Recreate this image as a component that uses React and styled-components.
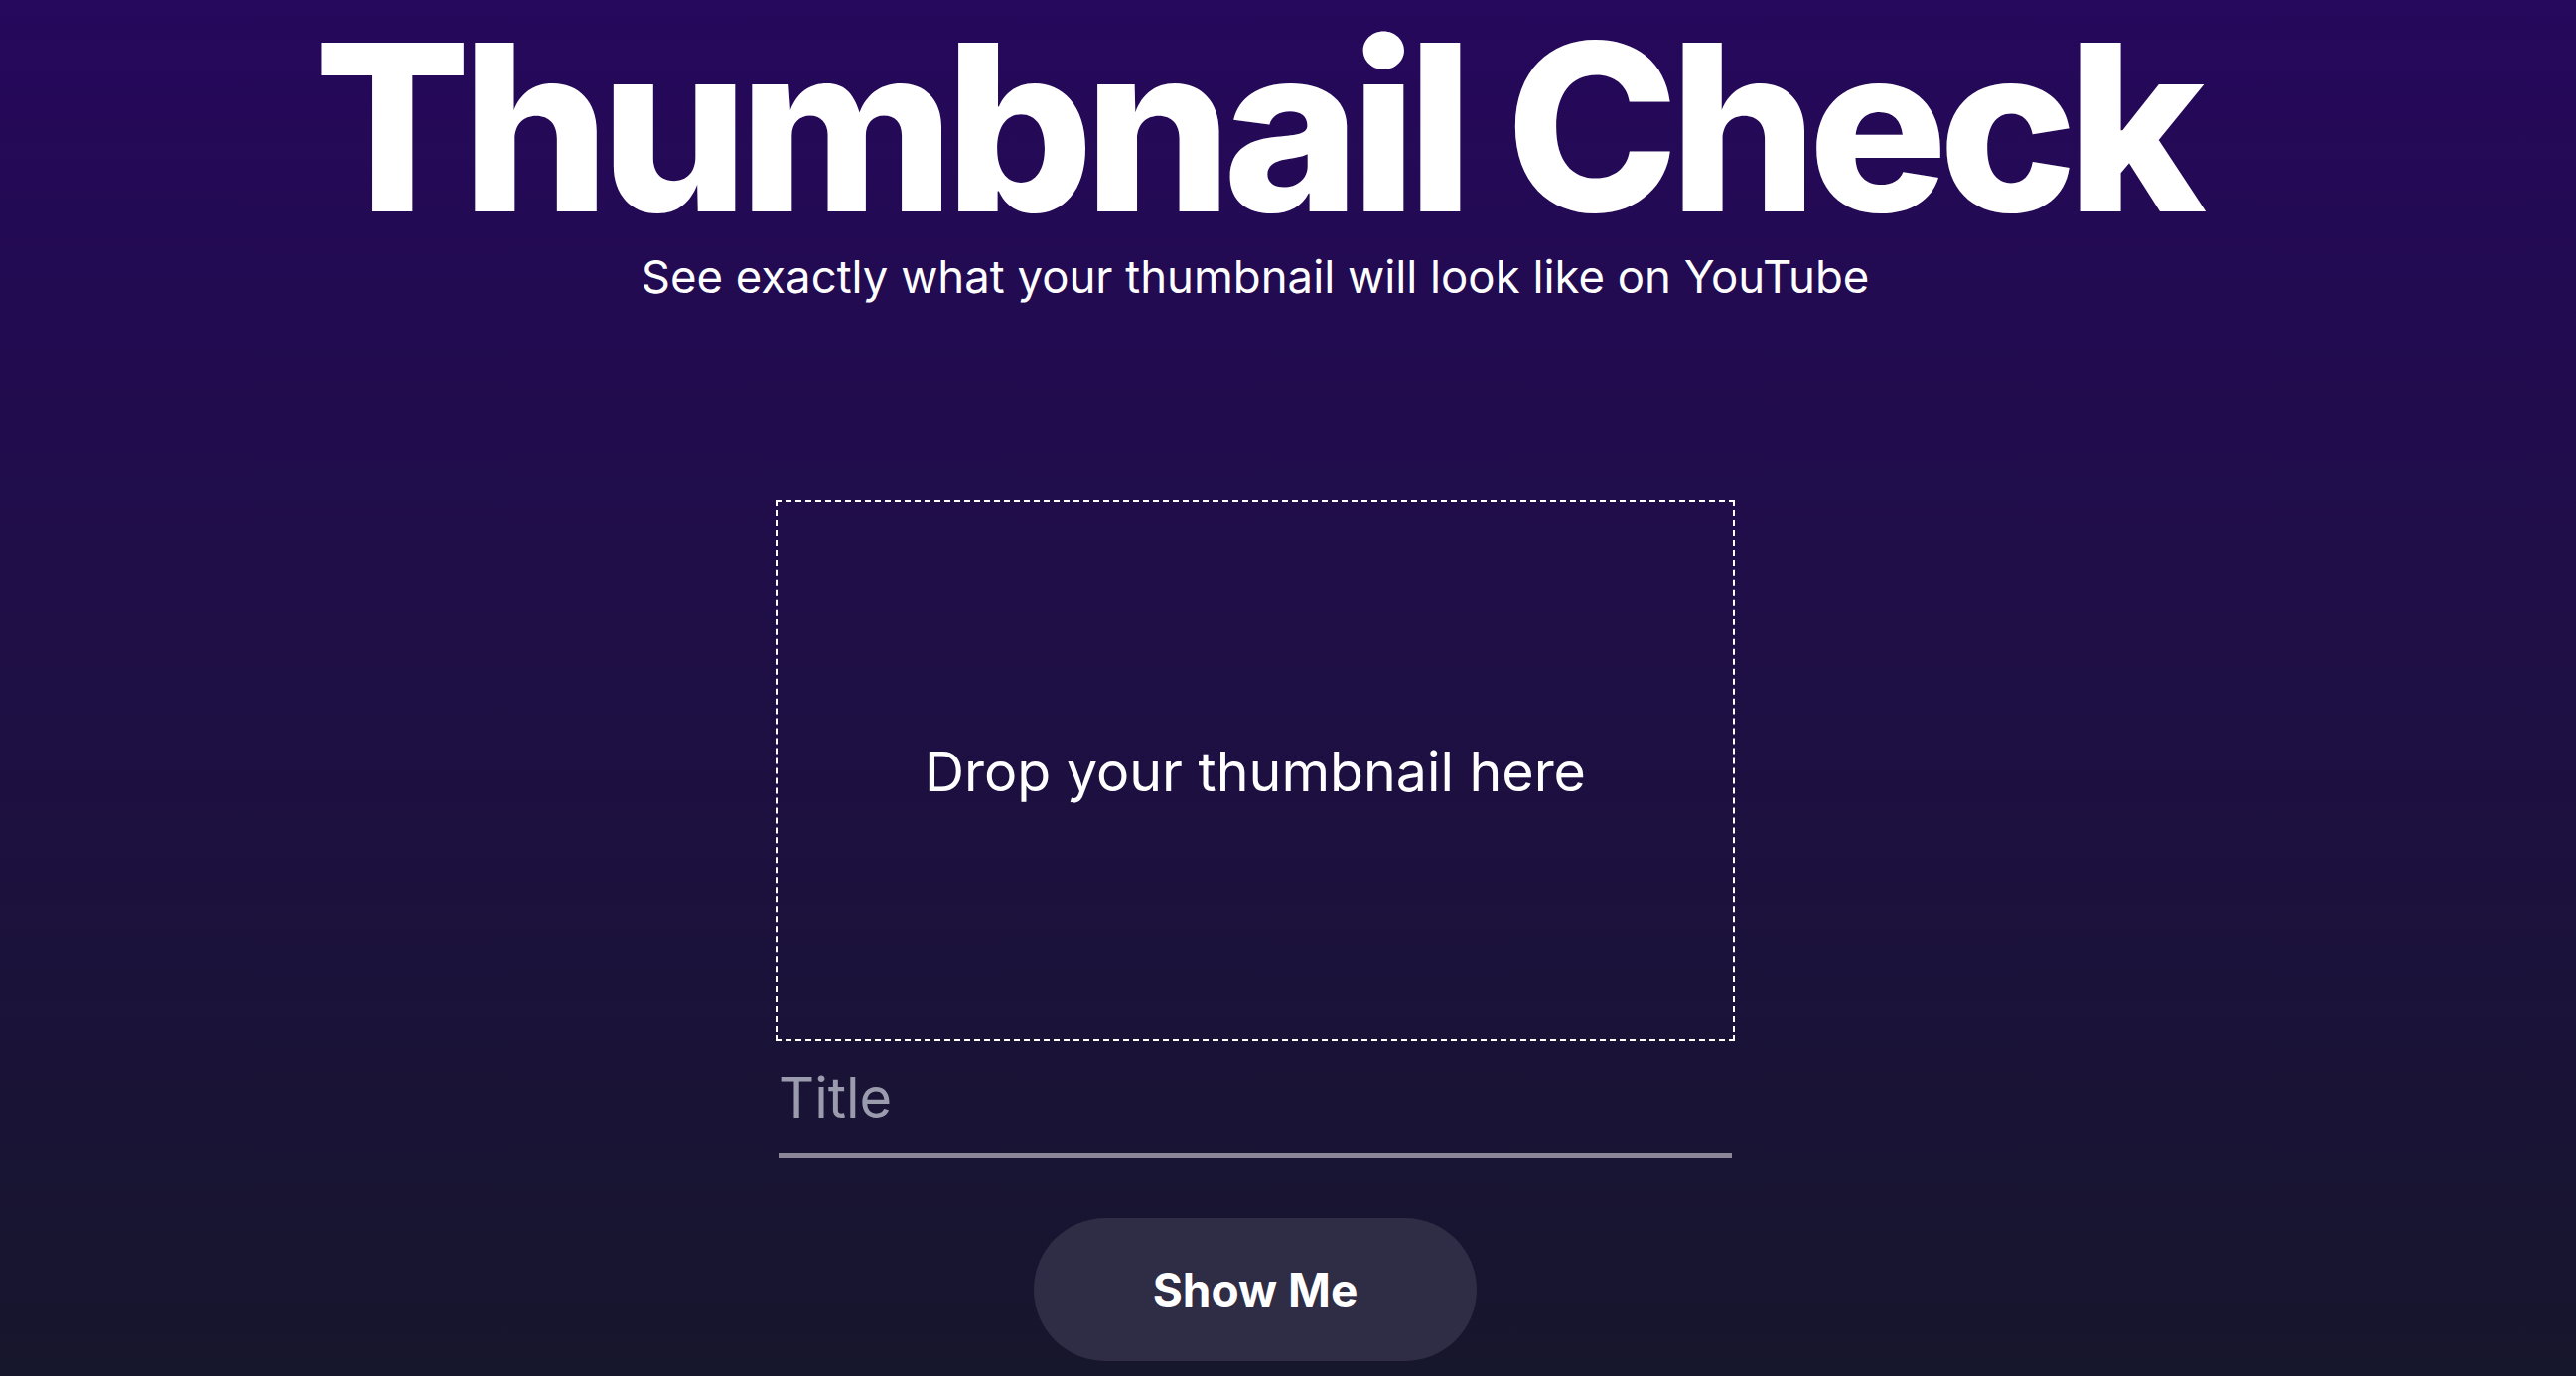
import React from "react";
import styled, { createGlobalStyle } from "styled-components";

const Global = createGlobalStyle`
  html, body {
    margin: 0;
    padding: 0;
    height: 100%;
  }
  body {
    font-family: Inter, "Noto Sans", sans-serif;
    background: linear-gradient(to bottom, #26085c 0%, #16162c 100%);
    color: #ffffff;
    overflow: hidden;
  }
  #root {
    min-height: 100vh;
  }
`;

const Page = styled.main`
  min-height: 100vh;
  box-sizing: border-box;
  padding: 11px 66px 0 0;
  display: flex;
  flex-direction: column;
  align-items: center;
`;

const Heading = styled.h1`
  margin: 0;
  font-family: Inter, sans-serif;
  font-size: 234px;
  font-weight: 800;
  letter-spacing: -0.039em;
  line-height: 1;
  white-space: nowrap;
`;

const Tagline = styled.p`
  margin: 6px 0 0;
  font-size: 45.5px;
  font-weight: 400;
  line-height: 1.21;
`;

const DropZone = styled.div`
  margin-top: 198px;
  box-sizing: border-box;
  width: 966px;
  height: 545px;
  border: 2px dashed #ffffff;
  display: flex;
  align-items: center;
  justify-content: center;
  font-size: 55.5px;
  font-weight: 400;
  cursor: pointer;
`;

const TitleInput = styled.input`
  margin-top: 23px;
  box-sizing: content-box;
  width: 960px;
  height: 69px;
  padding: 0 0 20px;
  border: none;
  border-bottom: 5px solid #8b8799;
  background: transparent;
  font-family: Inter, sans-serif;
  font-size: 56px;
  line-height: 69px;
  color: #ffffff;
  outline: none;
  &::placeholder {
    color: #9a9bad;
  }
`;

const ActionButton = styled.button`
  margin-top: 61px;
  width: 446px;
  height: 144px;
  border: none;
  border-radius: 72px;
  background: #2f2c45;
  color: #ffffff;
  font-family: Inter, sans-serif;
  font-size: 46px;
  font-weight: 700;
  cursor: pointer;
`;

export default function App() {
  return (
    <>
      <Global />
      <Page>
        <Heading>Thumbnail Check</Heading>
        <Tagline>See exactly what your thumbnail will look like on YouTube</Tagline>
        <DropZone>Drop your thumbnail here</DropZone>
        <TitleInput type="text" placeholder="Title" />
        <ActionButton>Show Me</ActionButton>
      </Page>
    </>
  );
}
